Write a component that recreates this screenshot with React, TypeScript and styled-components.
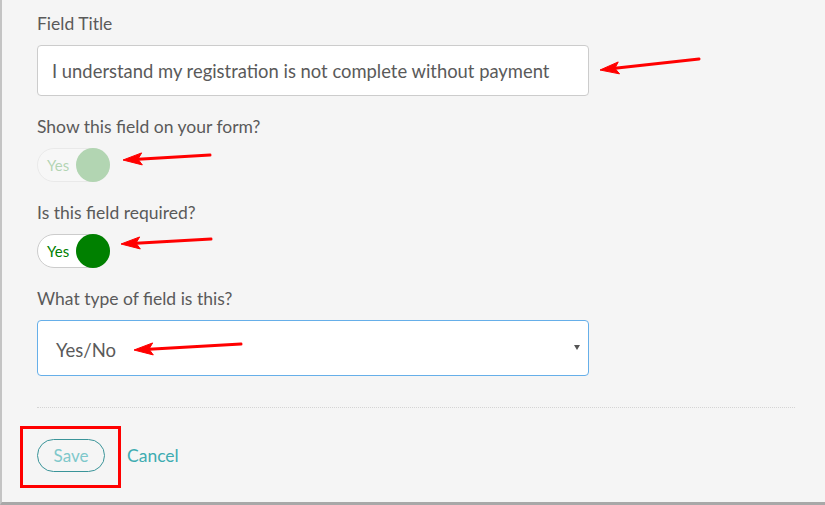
import React from "react";
import styled, { createGlobalStyle } from "styled-components";

const GlobalStyle = createGlobalStyle`
  html, body {
    margin: 0;
    padding: 0;
    background: #f5f5f5;
  }
  body {
    font-family: Lato, "Open Sans", "Liberation Sans", sans-serif;
    color: #5a5a5a;
  }
`;

const Page = styled.div`
  position: relative;
  box-sizing: border-box;
  width: 825px;
  height: 505px;
  overflow: hidden;
  background: #f5f5f5;
  border-left: 2px solid #c4c4c4;
  border-bottom: 3px solid #a8a8a8;
  padding: 12px 30px 0 35px;
`;

const FormGroup = styled.div`
  margin-bottom: 19px;
`;

const Label = styled.div`
  font-size: 17.5px;
  line-height: 23px;
  color: #5a5a5a;
  margin-bottom: 10px;
`;

const TextInput = styled.div`
  box-sizing: border-box;
  width: 552px;
  height: 51px;
  background: #fff;
  border: 1px solid #ccc;
  border-radius: 4px;
  padding: 0 14px;
  display: flex;
  align-items: center;
  font-size: 18.4px;
  color: #5a5a5a;
  white-space: nowrap;
`;

const Toggle = styled.div<{ $disabled?: boolean }>`
  box-sizing: border-box;
  width: 73px;
  height: 34px;
  background: #fff;
  border: 1px solid #ccc;
  border-radius: 17px;
  display: flex;
  align-items: center;
  justify-content: space-between;
  padding-left: 9px;
  opacity: ${(p) => (p.$disabled ? 0.27 : 1)};
`;

const ToggleText = styled.span`
  font-size: 15px;
  color: #008000;
`;

const Knob = styled.span`
  width: 34px;
  height: 34px;
  margin-right: -1px;
  border-radius: 50%;
  background: #008000;
`;

const Select = styled.div`
  box-sizing: border-box;
  width: 552px;
  height: 56px;
  background: #fff;
  border: 1px solid #66afe9;
  border-radius: 4px;
  padding: 4px 8px 0 18px;
  display: flex;
  align-items: center;
  justify-content: space-between;
  font-size: 18.5px;
  color: #5a5a5a;
`;

const Caret = styled.span`
  width: 0;
  height: 0;
  margin-top: -6px;
  border-left: 3px solid transparent;
  border-right: 3px solid transparent;
  border-top: 5px solid #555;
`;

const Divider = styled.div`
  width: 758px;
  margin-top: 31px;
  border-top: 1px dotted #d4d4d4;
`;

const Actions = styled.div`
  display: flex;
  align-items: center;
  gap: 22px;
  margin-top: 31px;
`;

const SaveButton = styled.button`
  box-sizing: border-box;
  width: 68px;
  height: 33px;
  border: 1px solid #3a9499;
  border-radius: 17px;
  background: transparent;
  color: #7ec8cb;
  font-family: inherit;
  font-size: 17px;
  padding: 0;
`;

const CancelLink = styled.a`
  color: #3eacb1;
  font-size: 17.5px;
  text-decoration: none;
`;

/* annotation overlays; the page has a 2px left border, so offsets are shifted */
const Highlight = styled.div`
  position: absolute;
  left: 18px;
  top: 426px;
  width: 101px;
  height: 62px;
  box-sizing: border-box;
  border: 3px solid #ff0000;
  pointer-events: none;
`;

const Overlay = styled.svg`
  position: absolute;
  left: -2px;
  top: 0;
  pointer-events: none;
`;

type Arrow = { tip: [number, number]; tail: [number, number] };

const arrows: Arrow[] = [
  { tip: [600, 70], tail: [699, 59] },
  { tip: [123, 160], tail: [210, 155] },
  { tip: [121, 244], tail: [211, 239] },
  { tip: [134, 350], tail: [241, 344] },
];

function ArrowMark({ tip, tail }: Arrow) {
  const dx = tail[0] - tip[0];
  const dy = tail[1] - tip[1];
  const len = Math.hypot(dx, dy);
  const ux = dx / len;
  const uy = dy / len;
  const headLen = 19;
  const half = 6;
  const bx = tip[0] + ux * headLen;
  const by = tip[1] + uy * headLen;
  const p1 = `${bx - uy * half},${by + ux * half}`;
  const p2 = `${bx + uy * half},${by - ux * half}`;
  const nx = tip[0] + ux * (headLen - 4);
  const ny = tip[1] + uy * (headLen - 4);
  return (
    <g fill="#ff0000" stroke="#ff0000">
      <line x1={nx} y1={ny} x2={tail[0]} y2={tail[1]} strokeWidth={3} strokeLinecap="round" />
      <polygon points={`${tip[0]},${tip[1]} ${p1} ${nx},${ny} ${p2}`} strokeWidth={1} strokeLinejoin="round" />
    </g>
  );
}

export default function App() {
  return (
    <>
      <GlobalStyle />
      <Page>
        <FormGroup>
          <Label>Field Title</Label>
          <TextInput>I understand my registration is not complete without payment</TextInput>
        </FormGroup>

        <FormGroup>
          <Label>Show this field on your form?</Label>
          <Toggle $disabled>
            <ToggleText>Yes</ToggleText>
            <Knob />
          </Toggle>
        </FormGroup>

        <FormGroup>
          <Label>Is this field required?</Label>
          <Toggle>
            <ToggleText>Yes</ToggleText>
            <Knob />
          </Toggle>
        </FormGroup>

        <FormGroup>
          <Label>What type of field is this?</Label>
          <Select>
            <span>Yes/No</span>
            <Caret />
          </Select>
        </FormGroup>

        <Divider />

        <Actions>
          <SaveButton>Save</SaveButton>
          <CancelLink href="#">Cancel</CancelLink>
        </Actions>

        <Highlight />
        <Overlay width={825} height={505}>
          {arrows.map((a, i) => (
            <ArrowMark key={i} {...a} />
          ))}
        </Overlay>
      </Page>
    </>
  );
}
